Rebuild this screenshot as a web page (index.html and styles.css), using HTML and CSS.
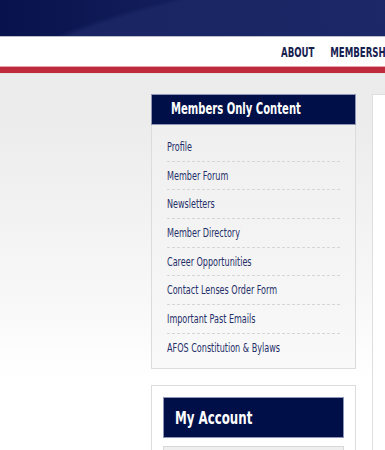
FILE: index.html
```html
<!DOCTYPE html>
<html>
<head>
<meta charset="utf-8">
<link rel="stylesheet" href="styles.css">
</head>
<body>
<header class="banner"><div class="swoosh"></div></header>
<nav class="nav">
  <div class="nav-row">
    <a class="nav-link">ABOUT</a>
    <a class="nav-link">MEMBERSHIP</a>
    <a class="nav-link">EVENTS</a>
  </div>
</nav>
<div class="redbar"></div>
<main class="main">
  <aside class="sidebar">
    <section class="box members">
      <h2 class="box-title"><span class="narrow">Members Only Content</span></h2>
      <ul class="menu">
        <li class="menu-item"><span class="narrow">Profile</span></li>
        <li class="menu-item"><span class="narrow">Member Forum</span></li>
        <li class="menu-item"><span class="narrow">Newsletters</span></li>
        <li class="menu-item"><span class="narrow">Member Directory</span></li>
        <li class="menu-item"><span class="narrow">Career Opportunities</span></li>
        <li class="menu-item"><span class="narrow">Contact Lenses Order Form</span></li>
        <li class="menu-item"><span class="narrow">Important Past Emails</span></li>
        <li class="menu-item"><span class="narrow">AFOS Constitution &amp; Bylaws</span></li>
      </ul>
    </section>
    <section class="box account">
      <h2 class="account-title"><span class="narrow">My Account</span></h2>
      <div class="account-body"></div>
    </section>
  </aside>
  <div class="content"></div>
</main>
</body>
</html>
```
FILE: styles.css
```css
* { box-sizing: border-box; }
html, body { margin: 0; padding: 0; overflow: hidden; }
body {
  width: 385px;
  height: 450px;
  font-family: "DejaVu Sans Condensed", "Liberation Sans", sans-serif;
  background: linear-gradient(to bottom, #ebebeb 0px, #ececec 120px, #f8f8f8 300px, #ffffff 380px);
}
.narrow {
  display: inline-block;
  transform-origin: 0 50%;
  white-space: nowrap;
}
.banner {
  position: relative;
  height: 37px;
  overflow: hidden;
  background: linear-gradient(to right, #08124c 0%, #0f1a56 30%, #18235f 60%, #1d2a6b 85%, #1b2767 100%);
  border-bottom: 1px solid #b9bccb;
}
.swoosh {
  position: absolute;
  left: 0px;
  top: 8px;
  width: 700px;
  height: 160px;
  border-radius: 50% 50% 0 0;
  background: linear-gradient(to right, #1a2462, #1b2766 50%, #1f2c6c);
  transform: rotate(-5deg);
  transform-origin: 0 0;
  box-shadow: 0 -1px 5px rgba(50,65,130,0.45);
}
.nav {
  height: 29px;
  background: #fff;
  overflow: hidden;
  position: relative;
}
.nav-row {
  display: flex;
  align-items: center;
  height: 29px;
  gap: 24px;
  margin-left: 281px;
  white-space: nowrap;
  transform: scaleX(0.66);
  transform-origin: 0 50%;
}
.nav-link {
  font-weight: bold;
  font-size: 14.5px;
  color: #16204f;
  flex: none;
}
.redbar {
  height: 8px;
  background: #be2b3c;
  border-top: 1px solid #e8a4ac;
  border-bottom: 1px solid #e6e6e6;
}
.main {
  display: flex;
  gap: 16px;
  padding: 20px 0 0 151px;
  align-items: flex-start;
}
.sidebar {
  width: 205px;
  flex: none;
  display: flex;
  flex-direction: column;
  gap: 16px;
}
.box { margin: 0; }
.members {
  border: 1px solid #dcdcdc;
  border-top: none;
  background: linear-gradient(to bottom, #eeeeee, #f9f9f9);
}
.box-title {
  margin: 0 -1px;
  height: 31px;
  background: #000f48;
  border: 1px solid #8f96b5;
  color: #fff;
  font-size: 15.5px;
  font-weight: bold;
  line-height: 28px;
  padding-left: 19px;
}
.box-title .narrow { transform: scaleX(0.72); }
.menu {
  list-style: none;
  margin: 0;
  padding: 8px 15px 5px 15px;
}
.menu-item {
  height: 28.7px;
  line-height: 28px;
  font-size: 11.5px;
  color: #252f68;
  border-bottom: 1px dashed #d6d6d6;
}
.menu-item .narrow { transform: scaleX(0.78); }
.menu-item:last-child { border-bottom: none; }
.account {
  background: #fff;
  border: 1px solid #dcdcdc;
  padding: 11px 11px 0 11px;
}
.account-title {
  margin: 0;
  height: 41px;
  background: #000f48;
  border: 1px solid #8f96b5;
  color: #fff;
  font-size: 18px;
  font-weight: bold;
  line-height: 39px;
  padding-left: 11px;
}
.account-title .narrow { transform: scaleX(0.73); }
.account-body {
  margin-top: 8px;
  height: 40px;
  background: #efefef;
  border: 1px solid #d8d8d8;
}
.content {
  flex: 1;
  height: 400px;
  background: #fff;
  border: 1px solid #dedede;
  border-right: none;
}
```
